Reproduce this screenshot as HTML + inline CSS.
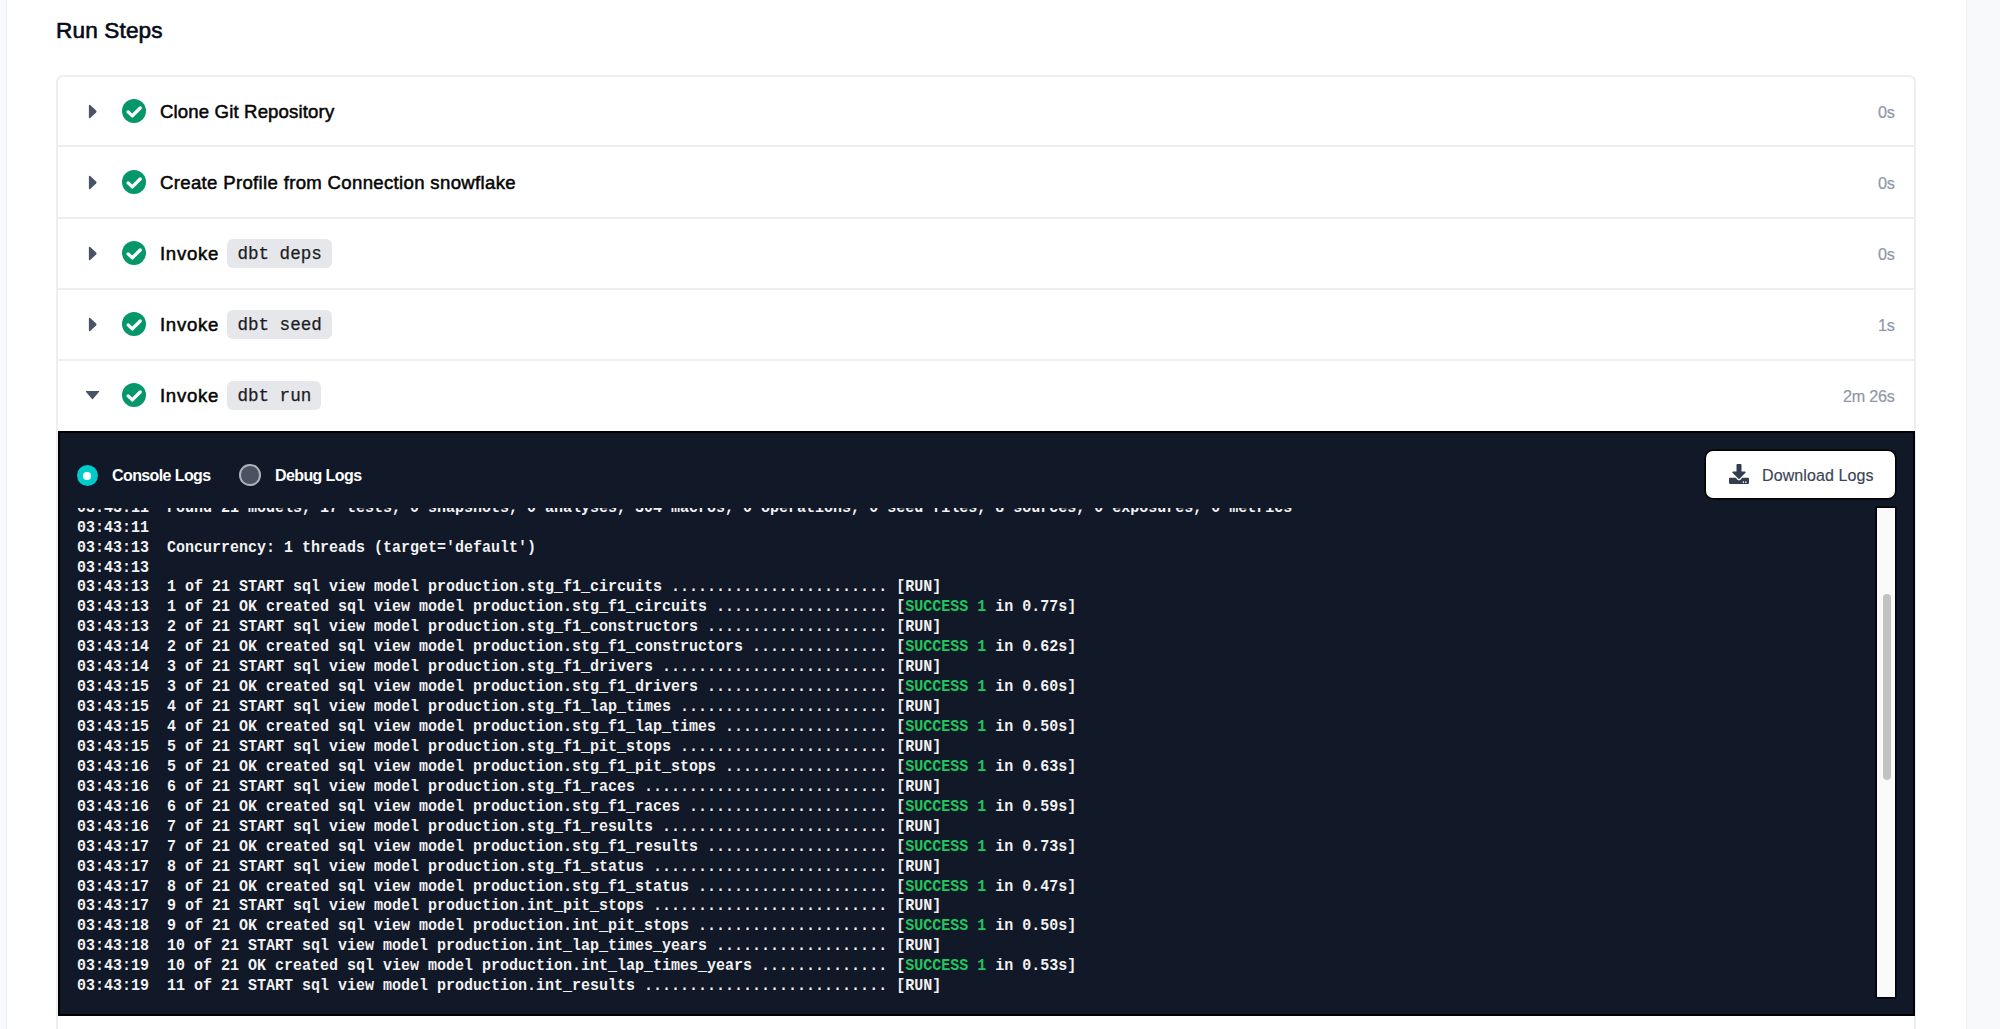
<!DOCTYPE html>
<html><head><meta charset="utf-8">
<style>
*{box-sizing:border-box;margin:0;padding:0}
html,body{width:2000px;height:1029px;overflow:hidden;background:#f8f9fb}
body{position:relative;font-family:"Liberation Sans",sans-serif}
.abs{position:absolute}
#page{position:absolute;left:6px;top:0;width:1961px;height:1029px;background:#fff;border-left:1px solid #eff0f3;border-right:1px solid #eff0f3}
#h{position:absolute;left:56.1px;top:16.1px;font-size:22.6px;line-height:30px;font-weight:400;-webkit-text-stroke:0.62px #060b19;color:#060b19;letter-spacing:0.12px;white-space:nowrap}
#card{position:absolute;left:56px;top:75px;width:1860px;height:1100px;border:2px solid #edeef1;border-radius:7px;background:#fff}
.sep{position:absolute;left:57px;width:1857px;height:2px;background:#edeef1}
.tri{position:absolute}
.chk{position:absolute;width:24px;height:24px}
.title{position:absolute;left:160px;font-size:18.6px;line-height:24px;font-weight:400;-webkit-text-stroke:0.5px #050505;color:#050505;white-space:nowrap;letter-spacing:-0.25px}
.dur{position:absolute;right:105.5px;font-size:16.2px;line-height:24px;color:#8f97a9;-webkit-text-stroke:0.2px #8f97a9;white-space:nowrap;letter-spacing:-0.25px}
.pill{position:absolute;left:227.4px;height:29.5px;border-radius:6px;background:#e6e7eb;font-family:"Liberation Mono",monospace;font-size:17.6px;line-height:31px;color:#1c1e24;-webkit-text-stroke:0.25px #1c1e24;padding:0 10px;white-space:pre}
#panel{position:absolute;left:57.5px;top:431px;width:1857px;height:585px;background:#111827;border:2px solid #000}
.radio{position:absolute;width:21px;height:21px;border-radius:50%}
.rl{position:absolute;margin-left:1px;font-size:16px;line-height:20px;font-weight:700;color:#fff;white-space:nowrap;letter-spacing:-0.6px}
#dl{position:absolute;left:1705.6px;top:450.5px;width:189.4px;height:47.5px;background:#fff;border-radius:7px;box-shadow:0 0 0 1.5px #000}
#dlt{position:absolute;left:1762px;top:465.7px;font-size:16px;line-height:20px;color:#3a4457;-webkit-text-stroke:0.15px #3a4457;letter-spacing:0.1px;white-space:nowrap}
#view{position:absolute;left:58px;top:508px;width:1815px;height:489px;overflow:hidden}
#logs{position:absolute;left:18.9px;top:-10.3px;font-weight:700;font-family:"Liberation Mono",monospace;font-size:17px;line-height:19.94px;color:#f2f2f2;white-space:pre;transform:scaleX(0.88235);transform-origin:0 0}
.g{color:#22c45e}
#track{position:absolute;left:1877px;top:508px;width:18px;height:489px;background:#fafafa;box-shadow:0 0 0 1.5px #000}
#thumb{position:absolute;left:1882.5px;top:594px;width:8.5px;height:186px;border-radius:5px;background:#c2c2c2}
</style></head><body>
<div id="page"></div>
<div id="h">Run Steps</div>
<div id="card"></div>
<div class="sep" style="top:145px"></div>
<div class="sep" style="top:217px"></div>
<div class="sep" style="top:288px"></div>
<div class="sep" style="top:358.5px"></div>
<svg class="tri" style="left:87.5px;top:103.5px" width="10" height="15" viewBox="0 0 10 15"><path d="M2.2 1.1 L8.1 6.4 Q9 7.5 8.1 8.6 L2.2 13.9 Q0.9 14.9 0.9 13.2 L0.9 1.8 Q0.9 0.1 2.2 1.1Z" fill="#4a5366"/></svg>
<svg class="chk" style="left:122px;top:99px" viewBox="0 0 24 24"><circle cx="12" cy="12" r="12" fill="#05976a"/><path d="M6.1 12.9 L10.3 16.9 L18.2 9" fill="none" stroke="#fff" stroke-width="3.3" stroke-linecap="round" stroke-linejoin="round"/></svg>
<div class="title" style="top:99.8px;letter-spacing:0.14px">Clone Git Repository</div>
<div class="dur" style="top:99.7px">0s</div>
<svg class="tri" style="left:87.5px;top:174.5px" width="10" height="15" viewBox="0 0 10 15"><path d="M2.2 1.1 L8.1 6.4 Q9 7.5 8.1 8.6 L2.2 13.9 Q0.9 14.9 0.9 13.2 L0.9 1.8 Q0.9 0.1 2.2 1.1Z" fill="#4a5366"/></svg>
<svg class="chk" style="left:122px;top:170px" viewBox="0 0 24 24"><circle cx="12" cy="12" r="12" fill="#05976a"/><path d="M6.1 12.9 L10.3 16.9 L18.2 9" fill="none" stroke="#fff" stroke-width="3.3" stroke-linecap="round" stroke-linejoin="round"/></svg>
<div class="title" style="top:170.8px;letter-spacing:0.32px">Create Profile from Connection snowflake</div>
<div class="dur" style="top:170.7px">0s</div>
<svg class="tri" style="left:87.5px;top:245.5px" width="10" height="15" viewBox="0 0 10 15"><path d="M2.2 1.1 L8.1 6.4 Q9 7.5 8.1 8.6 L2.2 13.9 Q0.9 14.9 0.9 13.2 L0.9 1.8 Q0.9 0.1 2.2 1.1Z" fill="#4a5366"/></svg>
<svg class="chk" style="left:122px;top:241px" viewBox="0 0 24 24"><circle cx="12" cy="12" r="12" fill="#05976a"/><path d="M6.1 12.9 L10.3 16.9 L18.2 9" fill="none" stroke="#fff" stroke-width="3.3" stroke-linecap="round" stroke-linejoin="round"/></svg>
<div class="title" style="top:241.8px;letter-spacing:0.7px">Invoke</div>
<div class="pill" style="top:238.5px">dbt deps</div>
<div class="dur" style="top:241.7px">0s</div>
<svg class="tri" style="left:87.5px;top:316.5px" width="10" height="15" viewBox="0 0 10 15"><path d="M2.2 1.1 L8.1 6.4 Q9 7.5 8.1 8.6 L2.2 13.9 Q0.9 14.9 0.9 13.2 L0.9 1.8 Q0.9 0.1 2.2 1.1Z" fill="#4a5366"/></svg>
<svg class="chk" style="left:122px;top:312px" viewBox="0 0 24 24"><circle cx="12" cy="12" r="12" fill="#05976a"/><path d="M6.1 12.9 L10.3 16.9 L18.2 9" fill="none" stroke="#fff" stroke-width="3.3" stroke-linecap="round" stroke-linejoin="round"/></svg>
<div class="title" style="top:312.8px;letter-spacing:0.7px">Invoke</div>
<div class="pill" style="top:309.5px">dbt seed</div>
<div class="dur" style="top:312.7px">1s</div>
<svg class="tri" style="left:85px;top:390px" width="15" height="10" viewBox="0 0 15 10"><path d="M1.2 1 L13.8 1 Q14.6 1 14.1 1.7 L8 8.9 Q7.5 9.5 7 8.9 L0.9 1.7 Q0.4 1 1.2 1Z" fill="#4a5366"/></svg>
<svg class="chk" style="left:122px;top:383px" viewBox="0 0 24 24"><circle cx="12" cy="12" r="12" fill="#05976a"/><path d="M6.1 12.9 L10.3 16.9 L18.2 9" fill="none" stroke="#fff" stroke-width="3.3" stroke-linecap="round" stroke-linejoin="round"/></svg>
<div class="title" style="top:383.8px;letter-spacing:0.7px">Invoke</div>
<div class="pill" style="top:380.5px">dbt run</div>
<div class="dur" style="top:383.7px">2m 26s</div>
<div id="panel"></div>
<div class="radio" style="left:76.8px;top:464.5px;background:#00cccc"></div>
<div class="abs" style="left:83px;top:472.2px;width:7.6px;height:7.6px;border-radius:50%;background:#fff"></div>
<div class="rl" style="left:111px;top:466px">Console Logs</div>
<div class="radio" style="left:239.2px;top:464.4px;width:21.4px;height:21.4px;background:#4a5262;border:2px solid #aeb2ba"></div>
<div class="rl" style="left:274px;top:466px">Debug Logs</div>
<div id="dl"></div>
<svg class="abs" style="left:1729.4px;top:464px" width="20" height="20" viewBox="0 0 512 512"><path fill="#333d50" d="M216 0h80c13.3 0 24 10.7 24 24v168h87.7c17.8 0 26.7 21.5 14.1 34.1L269.7 378.3c-7.5 7.5-19.8 7.5-27.3 0L90.1 226.1c-12.6-12.6-3.700-34.1 14.100-34.1H192V24c0-13.3 10.7-24 24-24zm296 376v112c0 13.3-10.7 24-24 24H24c-13.3 0-24-10.7-24-24V376c0-13.3 10.7-24 24-24h146.7l49 49c20.100 20.100 52.500 20.100 72.600 0l49-49H488c13.3 0 24 10.7 24 24zm-124 88c0-11-9-20-20-20s-20 9-20 20 9 20 20 20 20-9 20-20zm64 0c0-11-9-20-20-20s-20 9-20 20 9 20 20 20 20-9 20-20z"/></svg>
<div id="dlt">Download Logs</div>
<div id="view"><div id="logs">03:43:11  Found 21 models, 17 tests, 0 snapshots, 0 analyses, 304 macros, 0 operations, 0 seed files, 8 sources, 0 exposures, 0 metrics
03:43:11  
03:43:13  Concurrency: 1 threads (target='default')
03:43:13  
03:43:13  1 of 21 START sql view model production.stg_f1_circuits ........................ [RUN]
03:43:13  1 of 21 OK created sql view model production.stg_f1_circuits ................... [<span class="g">SUCCESS 1</span> in 0.77s]
03:43:13  2 of 21 START sql view model production.stg_f1_constructors .................... [RUN]
03:43:14  2 of 21 OK created sql view model production.stg_f1_constructors ............... [<span class="g">SUCCESS 1</span> in 0.62s]
03:43:14  3 of 21 START sql view model production.stg_f1_drivers ......................... [RUN]
03:43:15  3 of 21 OK created sql view model production.stg_f1_drivers .................... [<span class="g">SUCCESS 1</span> in 0.60s]
03:43:15  4 of 21 START sql view model production.stg_f1_lap_times ....................... [RUN]
03:43:15  4 of 21 OK created sql view model production.stg_f1_lap_times .................. [<span class="g">SUCCESS 1</span> in 0.50s]
03:43:15  5 of 21 START sql view model production.stg_f1_pit_stops ....................... [RUN]
03:43:16  5 of 21 OK created sql view model production.stg_f1_pit_stops .................. [<span class="g">SUCCESS 1</span> in 0.63s]
03:43:16  6 of 21 START sql view model production.stg_f1_races ........................... [RUN]
03:43:16  6 of 21 OK created sql view model production.stg_f1_races ...................... [<span class="g">SUCCESS 1</span> in 0.59s]
03:43:16  7 of 21 START sql view model production.stg_f1_results ......................... [RUN]
03:43:17  7 of 21 OK created sql view model production.stg_f1_results .................... [<span class="g">SUCCESS 1</span> in 0.73s]
03:43:17  8 of 21 START sql view model production.stg_f1_status .......................... [RUN]
03:43:17  8 of 21 OK created sql view model production.stg_f1_status ..................... [<span class="g">SUCCESS 1</span> in 0.47s]
03:43:17  9 of 21 START sql view model production.int_pit_stops .......................... [RUN]
03:43:18  9 of 21 OK created sql view model production.int_pit_stops ..................... [<span class="g">SUCCESS 1</span> in 0.50s]
03:43:18  10 of 21 START sql view model production.int_lap_times_years ................... [RUN]
03:43:19  10 of 21 OK created sql view model production.int_lap_times_years .............. [<span class="g">SUCCESS 1</span> in 0.53s]
03:43:19  11 of 21 START sql view model production.int_results ........................... [RUN]</div></div>
<div id="track"></div>
<div id="thumb"></div>
</body></html>
